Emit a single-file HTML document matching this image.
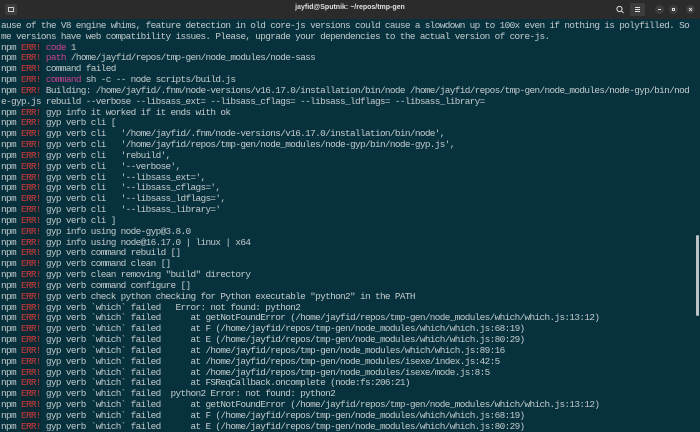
<!DOCTYPE html>
<html><head><meta charset="utf-8"><style>
html,body{margin:0;padding:0;width:700px;height:426px;overflow:hidden;background:#07323d;}
#bar{position:absolute;left:0;top:0;width:700px;height:19px;background:#2b2b2b;}
#title{position:absolute;left:0;width:700px;top:4px;text-align:center;color:#e0e0e0;font:bold 7px "Liberation Sans",sans-serif;}
.btn{position:absolute;}
pre{position:absolute;left:1px;top:21px;margin:0;font-family:"Liberation Mono",monospace;font-size:9.4px;letter-spacing:-0.64px;line-height:10.83px;color:#c3cbcd;white-space:pre;}
.e{color:#d23b3b;background:#0a2a33;}
.m{color:#c8418f;}
#sb{position:absolute;left:696px;top:235px;width:3px;height:81px;background:#b9c2c4;border-radius:2px;}
</style></head><body>
<div id="bar">
 <div class="btn" style="left:5px;top:4px;width:12px;height:11px;background:#3d3d3d;border-radius:2px;"></div>
 <div class="btn" style="left:8px;top:7px;width:6px;height:5px;border:1px solid #cfcfcf;box-sizing:border-box;"></div>
 <div id="title">jayfid@Sputnik: ~/repos/tmp-gen</div>
 <svg class="btn" style="left:613px;top:3px" width="14" height="13"><circle cx="6.5" cy="6" r="2.6" fill="none" stroke="#ddd" stroke-width="1"/><line x1="8.5" y1="8" x2="10.5" y2="10" stroke="#ddd" stroke-width="1"/></svg>
 <div class="btn" style="left:630px;top:3px;width:15px;height:13px;background:#3d3d3d;border-radius:2px;"></div>
 <svg class="btn" style="left:630px;top:3px" width="15" height="13"><path d="M5 4.5h5M5 6.5h5M5 8.5h5" stroke="#ddd" stroke-width="0.9"/></svg>
 <div class="btn" style="left:655px;top:5px;width:9px;height:9px;background:#3d3d3d;border-radius:50%;"></div>
 <div class="btn" style="left:658px;top:9px;width:3px;height:1px;background:#ddd;"></div>
 <div class="btn" style="left:669px;top:5px;width:9px;height:9px;background:#3d3d3d;border-radius:50%;"></div>
 <div class="btn" style="left:672px;top:8px;width:3px;height:3px;border:1px solid #ddd;box-sizing:border-box;"></div>
 <div class="btn" style="left:686px;top:5px;width:9px;height:9px;background:#3d3d3d;border-radius:50%;"></div>
 <svg class="btn" style="left:686px;top:5px" width="9" height="9"><path d="M3 3L6 6M6 3L3 6" stroke="#ddd" stroke-width="0.9"/></svg>
</div>
<pre>ause of the V8 engine whims, feature detection in old core-js versions could cause a slowdown up to 100x even if nothing is polyfilled. So
me versions have web compatibility issues. Please, upgrade your dependencies to the actual version of core-js.
npm <span class="e">ERR!</span> <span class="m">code</span> 1
npm <span class="e">ERR!</span> <span class="m">path</span> /home/jayfid/repos/tmp-gen/node_modules/node-sass
npm <span class="e">ERR!</span> command failed
npm <span class="e">ERR!</span> <span class="m">command</span> sh -c -- node scripts/build.js
npm <span class="e">ERR!</span> Building: /home/jayfid/.fnm/node-versions/v16.17.0/installation/bin/node /home/jayfid/repos/tmp-gen/node_modules/node-gyp/bin/nod
e-gyp.js rebuild --verbose --libsass_ext= --libsass_cflags= --libsass_ldflags= --libsass_library=
npm <span class="e">ERR!</span> gyp info it worked if it ends with ok
npm <span class="e">ERR!</span> gyp verb cli [
npm <span class="e">ERR!</span> gyp verb cli   '/home/jayfid/.fnm/node-versions/v16.17.0/installation/bin/node',
npm <span class="e">ERR!</span> gyp verb cli   '/home/jayfid/repos/tmp-gen/node_modules/node-gyp/bin/node-gyp.js',
npm <span class="e">ERR!</span> gyp verb cli   'rebuild',
npm <span class="e">ERR!</span> gyp verb cli   '--verbose',
npm <span class="e">ERR!</span> gyp verb cli   '--libsass_ext=',
npm <span class="e">ERR!</span> gyp verb cli   '--libsass_cflags=',
npm <span class="e">ERR!</span> gyp verb cli   '--libsass_ldflags=',
npm <span class="e">ERR!</span> gyp verb cli   '--libsass_library='
npm <span class="e">ERR!</span> gyp verb cli ]
npm <span class="e">ERR!</span> gyp info using node-gyp@3.8.0
npm <span class="e">ERR!</span> gyp info using node@16.17.0 | linux | x64
npm <span class="e">ERR!</span> gyp verb command rebuild []
npm <span class="e">ERR!</span> gyp verb command clean []
npm <span class="e">ERR!</span> gyp verb clean removing "build" directory
npm <span class="e">ERR!</span> gyp verb command configure []
npm <span class="e">ERR!</span> gyp verb check python checking for Python executable "python2" in the PATH
npm <span class="e">ERR!</span> gyp verb `which` failed   Error: not found: python2
npm <span class="e">ERR!</span> gyp verb `which` failed      at getNotFoundError (/home/jayfid/repos/tmp-gen/node_modules/which/which.js:13:12)
npm <span class="e">ERR!</span> gyp verb `which` failed      at F (/home/jayfid/repos/tmp-gen/node_modules/which/which.js:68:19)
npm <span class="e">ERR!</span> gyp verb `which` failed      at E (/home/jayfid/repos/tmp-gen/node_modules/which/which.js:80:29)
npm <span class="e">ERR!</span> gyp verb `which` failed      at /home/jayfid/repos/tmp-gen/node_modules/which/which.js:89:16
npm <span class="e">ERR!</span> gyp verb `which` failed      at /home/jayfid/repos/tmp-gen/node_modules/isexe/index.js:42:5
npm <span class="e">ERR!</span> gyp verb `which` failed      at /home/jayfid/repos/tmp-gen/node_modules/isexe/mode.js:8:5
npm <span class="e">ERR!</span> gyp verb `which` failed      at FSReqCallback.oncomplete (node:fs:206:21)
npm <span class="e">ERR!</span> gyp verb `which` failed  python2 Error: not found: python2
npm <span class="e">ERR!</span> gyp verb `which` failed      at getNotFoundError (/home/jayfid/repos/tmp-gen/node_modules/which/which.js:13:12)
npm <span class="e">ERR!</span> gyp verb `which` failed      at F (/home/jayfid/repos/tmp-gen/node_modules/which/which.js:68:19)
npm <span class="e">ERR!</span> gyp verb `which` failed      at E (/home/jayfid/repos/tmp-gen/node_modules/which/which.js:80:29)</pre>
<div id="sb"></div>
</body></html>
